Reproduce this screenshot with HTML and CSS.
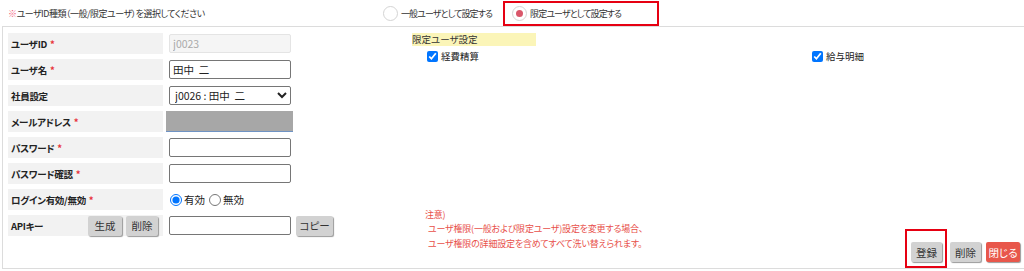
FILE: index.html
```html
<!DOCTYPE html>
<html lang="ja">
<head>
    <meta charset="UTF-8">
    <title>ユーザ設定</title>
    <link rel="stylesheet" href="styles.css">
</head>
<body>
    <div class="top">
        <p class="lead"><span class="mark">※</span>ユーザID種類（一般/限定ユーザ）を選択してください</p>
        <div class="kind">
            <label class="kind-opt"><span class="dot"></span>一般ユーザとして設定する</label>
            <label class="kind-opt is-on"><span class="dot"></span>限定ユーザとして設定する</label>
        </div>
    </div>

    <div class="panel">
        <div class="form">
            <div class="label">ユーザID <span class="req">*</span></div>
            <div class="field"><input type="text" class="text" value="j0023" disabled></div>

            <div class="label">ユーザ名 <span class="req">*</span></div>
            <div class="field"><input type="text" class="text" value="田中  二"></div>

            <div class="label">社員設定</div>
            <div class="field">
                <select class="text">
                    <option>j0026 : 田中&nbsp;&nbsp;二</option>
                </select>
            </div>

            <div class="label">メールアドレス <span class="req">*</span></div>
            <div class="field"><div class="masked"></div></div>

            <div class="label">パスワード <span class="req">*</span></div>
            <div class="field"><input type="password" class="text"></div>

            <div class="label">パスワード確認 <span class="req">*</span></div>
            <div class="field"><input type="password" class="text"></div>

            <div class="label">ログイン有効/無効 <span class="req">*</span></div>
            <div class="field radios">
                <label><input type="radio" name="login" checked>有効</label>
                <label><input type="radio" name="login">無効</label>
            </div>

            <div class="label label-api">
                <span>APIキー</span>
                <span class="btn-group">
                    <button class="btn btn-sm">生成</button>
                    <button class="btn btn-sm">削除</button>
                </span>
            </div>
            <div class="field">
                <input type="text" class="text">
                <button class="btn btn-copy">コピー</button>
            </div>
        </div>

        <div class="side">
            <div class="limit-title">限定ユーザ設定</div>
            <div class="limit-list">
                <label><input type="checkbox" checked>経費精算</label>
                <label><input type="checkbox" checked>給与明細</label>
            </div>

            <div class="bottom">
                <div class="notice">
                    <p>注意)</p>
                    <p class="indent">ユーザ権限(一般および限定ユーザ)設定を変更する場合、</p>
                    <p class="indent">ユーザ権限の詳細設定を含めてすべて洗い替えられます。</p>
                </div>
                <div class="actions">
                    <span class="focus"><button class="btn btn-act">登録</button></span>
                    <button class="btn btn-act">削除</button>
                    <button class="btn btn-act btn-close">閉じる</button>
                </div>
            </div>
        </div>
    </div>
</body>
</html>
```

FILE: styles.css
```css
* {
    box-sizing: border-box;
    margin: 0;
    padding: 0;
}

body {
    background: #fff;
    color: #222;
    font-family: "Noto Sans CJK JP", "Noto Sans", sans-serif;
    font-size: 9.5px;
    font-feature-settings: "palt";
    width: 1024px;
    height: 271px;
    overflow: hidden;
}

.top {
    display: flex;
    align-items: center;
    height: 26px;
    font-size: 9px;
}

.lead {
    padding-left: 8px;
    width: 383px;
    color: #333;
    letter-spacing: -0.5px;
}

.mark {
    color: #f25c7a;
}

.kind {
    display: flex;
    align-items: center;
    letter-spacing: -0.9px;
}

.kind-opt {
    display: flex;
    align-items: center;
    gap: 3px;
    height: 25px;
    color: #333;
}

.kind-opt .dot {
    width: 15px;
    height: 15px;
    border: 1px solid #d4d4d4;
    border-radius: 50%;
    background: #fff;
    position: relative;
}

.kind-opt.is-on {
    margin-left: 11px;
    padding: 0 36px 0 7px;
    border: 2px solid #e60012;
}

.kind-opt.is-on .dot::after {
    content: "";
    position: absolute;
    left: 3px;
    top: 3px;
    width: 7px;
    height: 7px;
    border-radius: 50%;
    background: #d9576a;
}

.panel {
    display: flex;
    margin-left: 2px;
    height: 243px;
    border: 1px solid #dcdcdc;
    border-right: none;
    padding: 6px 4px 0 5px;
}

.form {
    display: grid;
    grid-template-columns: 155px 175px;
    grid-auto-rows: 21px;
    row-gap: 5px;
    align-content: start;
    width: 330px;
}

.label {
    display: flex;
    align-items: center;
    background: #f2f2f2;
    padding-left: 3px;
    font-weight: bold;
    letter-spacing: -0.3px;
}

.req {
    color: #e8343a;
    margin-left: 3px;
}

.label-api {
    justify-content: space-between;
}

.btn-group {
    display: flex;
    gap: 4px;
    padding-right: 5px;
}

.field {
    display: flex;
    align-items: center;
    padding-left: 6px;
}

.text {
    width: 122px;
    height: 19px;
    border: 1px solid #767676;
    border-radius: 2px;
    padding: 0 3px;
    font: inherit;
    font-size: 10.5px;
    color: #222;
    background: #fff;
}

.text:disabled {
    background: #f5f5f5;
    border-color: #e4e4e4;
    color: #aaa;
}

select.text {
    padding: 0 1px;
}

.masked {
    margin-left: -3px;
    width: 127px;
    height: 21px;
    background: #a7a7a7;
    border-bottom: 1px solid #6f93c4;
}

.radios {
    gap: 3px;
    font-size: 10.5px;
}

.radios label {
    display: flex;
    align-items: center;
    gap: 2px;
}

.radios input {
    margin: 0 0 0 1px;
    width: 12px;
    height: 12px;
}

.btn {
    height: 20px;
    padding: 0;
    border: none;
    border-radius: 2px;
    background: #d2d2d2;
    box-shadow: 1px 1px 1px #9a9a9a;
    font: inherit;
    font-weight: normal;
    font-size: 10.5px;
    letter-spacing: 0;
    color: #333;
    white-space: nowrap;
}

.btn-sm {
    width: 34px;
}

.btn-sm + .btn-sm {
    width: 32px;
}

.btn-copy {
    margin-left: 5px;
    width: 37px;
}

.side {
    flex: 1;
    display: flex;
    flex-direction: column;
    margin-left: 74px;
}

.limit-title {
    width: 124px;
    height: 13px;
    line-height: 13px;
    background: #fbf5b8;
    color: #333;
}

.limit-list {
    display: grid;
    grid-template-columns: 385px 1fr;
    padding-left: 15px;
    margin-top: 3px;
}

.limit-list label {
    display: flex;
    align-items: center;
    gap: 3px;
}

.limit-list input {
    margin: 0;
    width: 11px;
    height: 11px;
}

.bottom {
    margin-top: auto;
    display: flex;
    align-items: flex-end;
}

.notice {
    margin-left: 13px;
    margin-bottom: 17px;
    color: #e8504a;
    font-size: 9px;
    letter-spacing: -0.2px;
    line-height: 14.5px;
}

.notice .indent {
    padding-left: 3px;
}

.actions {
    margin-left: auto;
    display: flex;
    align-items: flex-end;
}

.actions > .btn {
    margin-bottom: 6px;
    margin-left: 3px;
}

.actions > .btn-close {
    margin-left: 5px;
}

.btn-act {
    width: 31px;
}

.focus {
    display: block;
    padding: 11px 3px 4px 4px;
    border: 2px solid #e60012;
}

.btn-close {
    background: #e8574b;
    color: #fff;
    width: 34px;
}
```
